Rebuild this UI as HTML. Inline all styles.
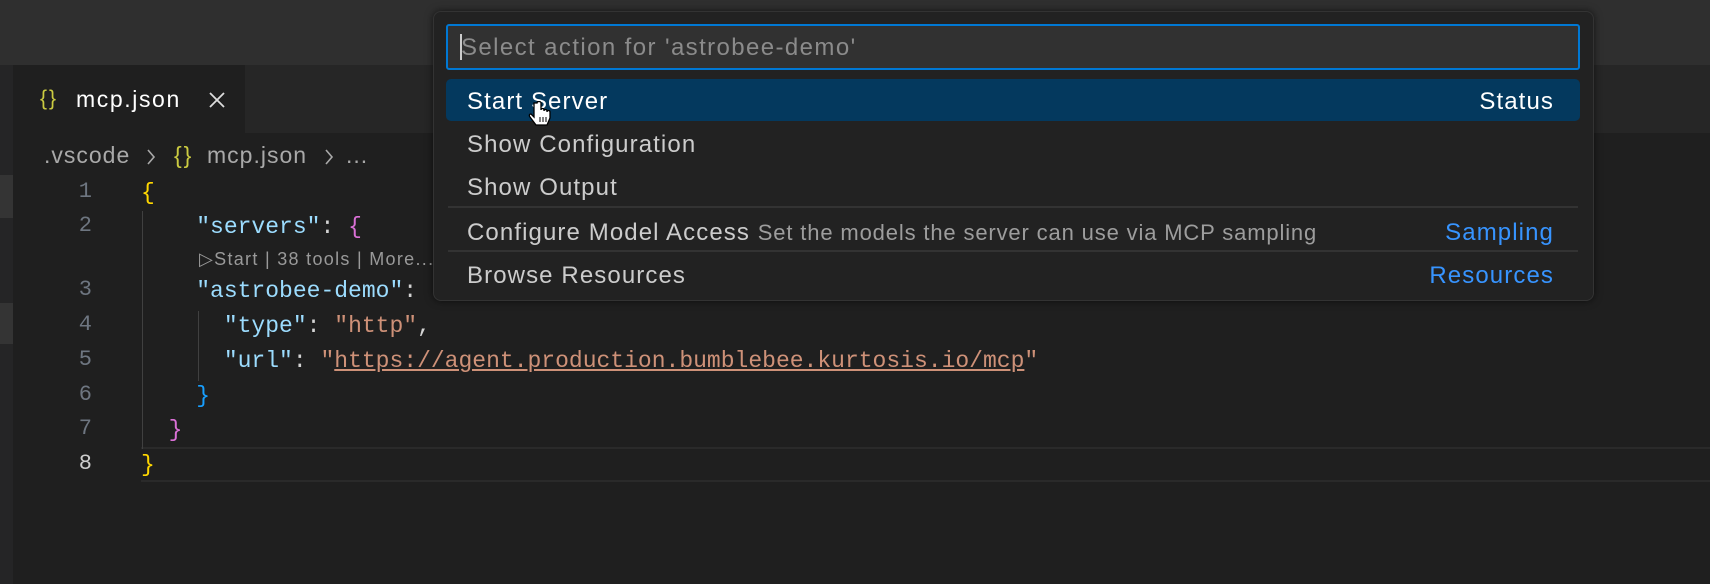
<!DOCTYPE html>
<html><head><meta charset="utf-8"><style>
*{margin:0;padding:0;box-sizing:border-box}
body{width:1710px;height:584px;background:#1f1f1f;position:relative;overflow:hidden;font-family:"Liberation Sans",sans-serif}
.abs{position:absolute;white-space:pre}
.ln{position:absolute;width:60px;left:32px;text-align:right;color:#6e7681;font-family:"Liberation Mono",monospace;font-size:22px}
.code{position:absolute;left:141px;font-family:"Liberation Mono",monospace;font-size:23px;white-space:pre;color:#d4d4d4;line-height:34px}
.k{color:#9cdcfe}.s{color:#ce9178}.y{color:#ffd700}.p{color:#da70d6}.b{color:#179fff}
.row{position:absolute;left:446px;width:1134px;height:42px;font-size:24px;letter-spacing:1.1px;color:#cccccc;line-height:45px;padding-left:21px}
.r{position:absolute;right:26px;top:0}
.bc{position:absolute;top:142px;font-size:23px;color:#a9a9a9;letter-spacing:1px}
</style></head><body>
<div class="abs" style="left:0;top:0;width:1710px;height:65px;background:#2f2f2f"></div>
<div class="abs" style="left:0;top:65px;width:1710px;height:68px;background:#262626"></div>
<div class="abs" style="left:13px;top:65px;width:232px;height:68px;background:#1f1f1f"></div>
<div class="abs" style="left:0;top:65px;width:13px;height:519px;background:#252526"></div>
<div class="abs" style="left:0;top:175px;width:13px;height:43px;background:#343434"></div>
<div class="abs" style="left:0;top:303px;width:13px;height:41px;background:#343434"></div>
<div class="abs" style="left:40px;top:87px;font-size:21px;color:#cbcb41;letter-spacing:2px">{}</div>
<div class="abs" style="left:76px;top:86px;font-size:23px;color:#fff;letter-spacing:1.6px">mcp.json</div>
<svg class="abs" style="left:207px;top:90px" width="20" height="20" viewBox="0 0 20 20"><path d="M3 3L17 17M17 3L3 17" stroke="#ddd" stroke-width="1.8"/></svg>
<div class="bc" style="left:44px">.vscode</div>
<svg class="abs" style="left:145px;top:147px" width="12" height="20" viewBox="0 0 12 20"><path d="M3 3L9 10L3 17" stroke="#a9a9a9" stroke-width="1.6" fill="none"/></svg>
<div class="bc" style="left:174px;color:#cbcb41;letter-spacing:2px">{}</div>
<div class="bc" style="left:207px">mcp.json</div>
<svg class="abs" style="left:323px;top:147px" width="12" height="20" viewBox="0 0 12 20"><path d="M3 3L9 10L3 17" stroke="#a9a9a9" stroke-width="1.6" fill="none"/></svg>
<div class="bc" style="left:346px">...</div>
<div class="ln" style="top:179px">1</div>
<div class="ln" style="top:213px">2</div>
<div class="ln" style="top:277px">3</div>
<div class="ln" style="top:312px">4</div>
<div class="ln" style="top:347px">5</div>
<div class="ln" style="top:382px">6</div>
<div class="ln" style="top:416px">7</div>
<div class="ln" style="top:451px;color:#ccc">8</div>
<div class="abs" style="left:141px;top:447px;width:1569px;height:35px;border-top:2px solid #2a2a2a;border-bottom:2px solid #2a2a2a"></div>
<div class="abs" style="left:142px;top:211px;width:1px;height:238px;background:#404040"></div>
<div class="abs" style="left:198px;top:311px;width:1px;height:70px;background:#404040"></div>
<div class="code" style="top:176px"><span class="y">{</span></div>
<div class="code" style="top:210px">    <span class="k">"servers"</span>: <span class="p">{</span></div>
<div class="abs" style="left:199px;top:249px;font-size:18px;letter-spacing:1.3px;color:#999">▷Start | 38 tools | More...</div>
<div class="code" style="top:274px">    <span class="k">"astrobee-demo"</span>:</div>
<div class="code" style="top:309px">      <span class="k">"type"</span>: <span class="s">"http"</span>,</div>
<div class="code" style="top:344px">      <span class="k">"url"</span>: <span class="s">"<span style="text-decoration:underline">https://agent.production.bumblebee.kurtosis.io/mcp</span>"</span></div>
<div class="code" style="top:379px">    <span class="b">}</span></div>
<div class="code" style="top:413px">  <span class="p">}</span></div>
<div class="code" style="top:448px"><span class="y">}</span></div>
<div class="abs" style="left:433px;top:11px;width:1161px;height:290px;background:#222222;border:1px solid #333;border-radius:8px;box-shadow:0 0 8px rgba(0,0,0,.6)"></div>
<div class="abs" style="left:446px;top:24px;width:1134px;height:46px;background:#313131;border:2px solid #0078d4;border-radius:3px"></div>
<div class="abs" style="left:460px;top:34px;width:2px;height:26px;background:#ccc"></div>
<div class="abs" style="left:461px;top:34px;font-size:24px;letter-spacing:1.4px;color:#8b8b8b">Select action for 'astrobee-demo'</div>
<div class="row" style="top:79px;background:#04395e;border-radius:5px;color:#fff">Start Server<span class="r">Status</span></div>
<div class="row" style="top:122px">Show Configuration</div>
<div class="row" style="top:165px">Show Output</div>
<div class="abs" style="left:448px;top:206px;width:1130px;height:2px;background:#333"></div>
<div class="row" style="top:210px">Configure Model Access <span style="font-size:22px;letter-spacing:0.85px;color:#9d9d9d">Set the models the server can use via MCP sampling</span><span class="r" style="color:#3794ff">Sampling</span></div>
<div class="abs" style="left:448px;top:250px;width:1130px;height:2px;background:#333"></div>
<div class="row" style="top:253px">Browse Resources<span class="r" style="color:#3794ff">Resources</span></div>
<svg class="abs" style="left:528px;top:101px" width="26" height="30" viewBox="0 0 26 30"><path d="M6 2v14l-3-3c-2 0-2 2-1 3l6 8h11l3-7v-6c0-2-3-2-3 0v-1c0-2-3-2-3 0v-1c0-2-3-2-3 0V2c0-2-4-2-4 0z" fill="#fff" stroke="#000" stroke-width="1.3"/><path d="M12 16v5M15 16v5M18 16v5" stroke="#000" stroke-width="1"/></svg>
</body></html>
